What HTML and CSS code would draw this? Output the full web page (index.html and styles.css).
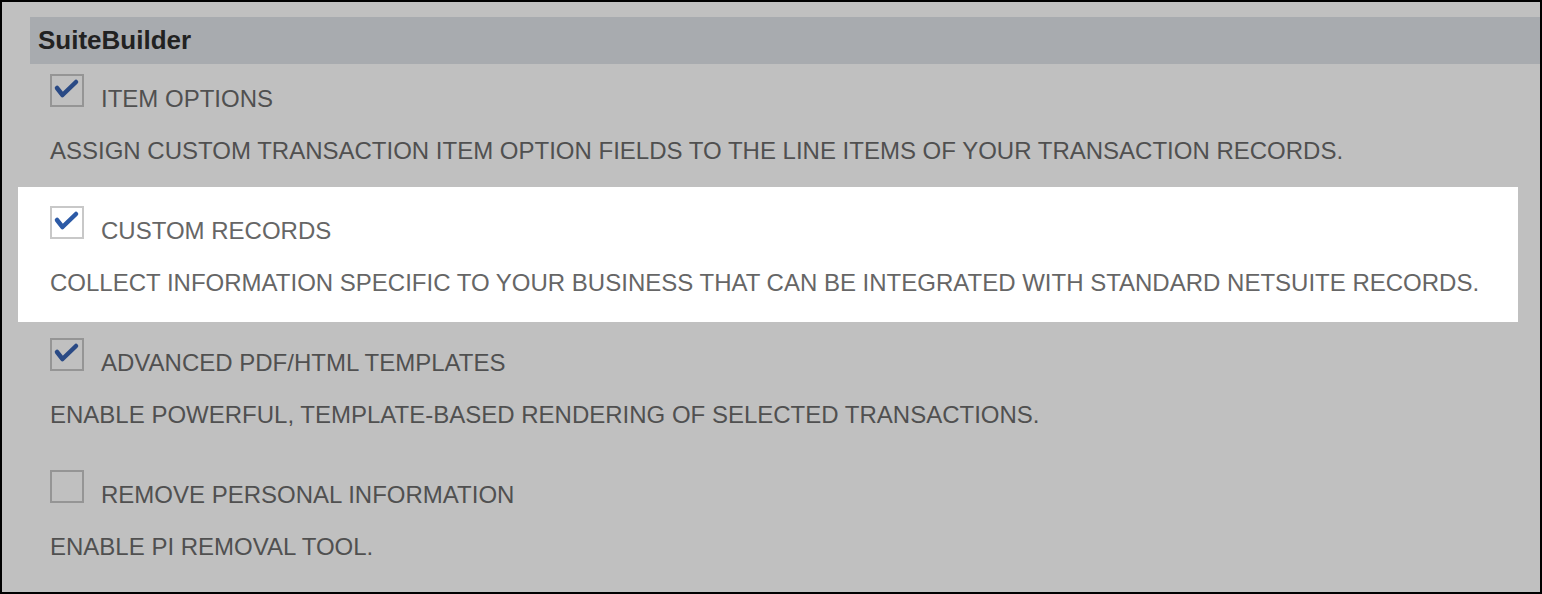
FILE: index.html
```html
<!DOCTYPE html>
<html>
<head>
<meta charset="utf-8">
<link rel="stylesheet" href="styles.css">
</head>
<body>
<div class="frame">
  <div class="section-title">SuiteBuilder</div>
  <div class="features">
    <div class="feature">
      <div class="feature-head">
        <span class="checkbox checked">
          <svg viewBox="0 0 34 33" width="34" height="33"><path d="M7 14 L12.5 21 L26 8" /></svg>
        </span>
        <span class="label">ITEM OPTIONS</span>
      </div>
      <div class="desc">ASSIGN CUSTOM TRANSACTION ITEM OPTION FIELDS TO THE LINE ITEMS OF YOUR TRANSACTION RECORDS.</div>
    </div>
    <div class="feature highlight">
      <div class="feature-head">
        <span class="checkbox checked">
          <svg viewBox="0 0 34 33" width="34" height="33"><path d="M7 14 L12.5 21 L26 8" /></svg>
        </span>
        <span class="label">CUSTOM RECORDS</span>
      </div>
      <div class="desc">COLLECT INFORMATION SPECIFIC TO YOUR BUSINESS THAT CAN BE INTEGRATED WITH STANDARD NETSUITE RECORDS.</div>
    </div>
    <div class="feature">
      <div class="feature-head">
        <span class="checkbox checked">
          <svg viewBox="0 0 34 33" width="34" height="33"><path d="M7 14 L12.5 21 L26 8" /></svg>
        </span>
        <span class="label">ADVANCED PDF/HTML TEMPLATES</span>
      </div>
      <div class="desc">ENABLE POWERFUL, TEMPLATE-BASED RENDERING OF SELECTED TRANSACTIONS.</div>
    </div>
    <div class="feature">
      <div class="feature-head">
        <span class="checkbox"></span>
        <span class="label">REMOVE PERSONAL INFORMATION</span>
      </div>
      <div class="desc">ENABLE PI REMOVAL TOOL.</div>
    </div>
  </div>
</div>
</body>
</html>
```

FILE: styles.css
```css
html, body {
  margin: 0;
  padding: 0;
  background: #000;
}
body {
  width: 1542px;
  height: 594px;
  padding: 2px;
  box-sizing: border-box;
  font-family: "Liberation Sans", Arial, sans-serif;
}
.frame {
  background: #c0c0c0;
  height: 590px;
  padding: 15px 0 0 16px;
  box-sizing: border-box;
  overflow: hidden;
}
.section-title {
  margin-left: 12px;
  height: 47px;
  background: #a8abaf;
  color: #222;
  font-weight: bold;
  font-size: 26px;
  line-height: 47px;
  padding-left: 8px;
}
.features {
  display: flex;
  flex-direction: column;
}
.feature {
  width: 1500px;
  box-sizing: border-box;
  padding: 10px 0 0 32px;
  height: 132px;
  flex-shrink: 0;
  color: #505050;
}
.feature.highlight {
  background: #fff;
  color: #666;
  margin-top: -9px;
  padding-top: 19px;
  height: 135px;
  margin-bottom: 6px;
}
.feature-head {
  display: flex;
  align-items: baseline;
  gap: 17px;
}
.checkbox {
  display: inline-block;
  width: 34px;
  height: 33px;
  box-sizing: border-box;
  border: 2px solid #959595;
  position: relative;
}
.highlight .checkbox {
  border-color: #c8c8c8;
}
.checkbox svg {
  position: absolute;
  left: -2px;
  top: -2px;
}
.checkbox svg path {
  fill: none;
  stroke: #2a4a85;
  stroke-width: 4.5;
  stroke-linecap: round;
  stroke-linejoin: round;
}
.highlight .checkbox svg path {
  stroke: #2c5aa6;
}
.label {
  font-size: 24px;
  line-height: 24px;
}
.desc {
  font-size: 24px;
  line-height: 24px;
  margin-top: 28px;
}
```
